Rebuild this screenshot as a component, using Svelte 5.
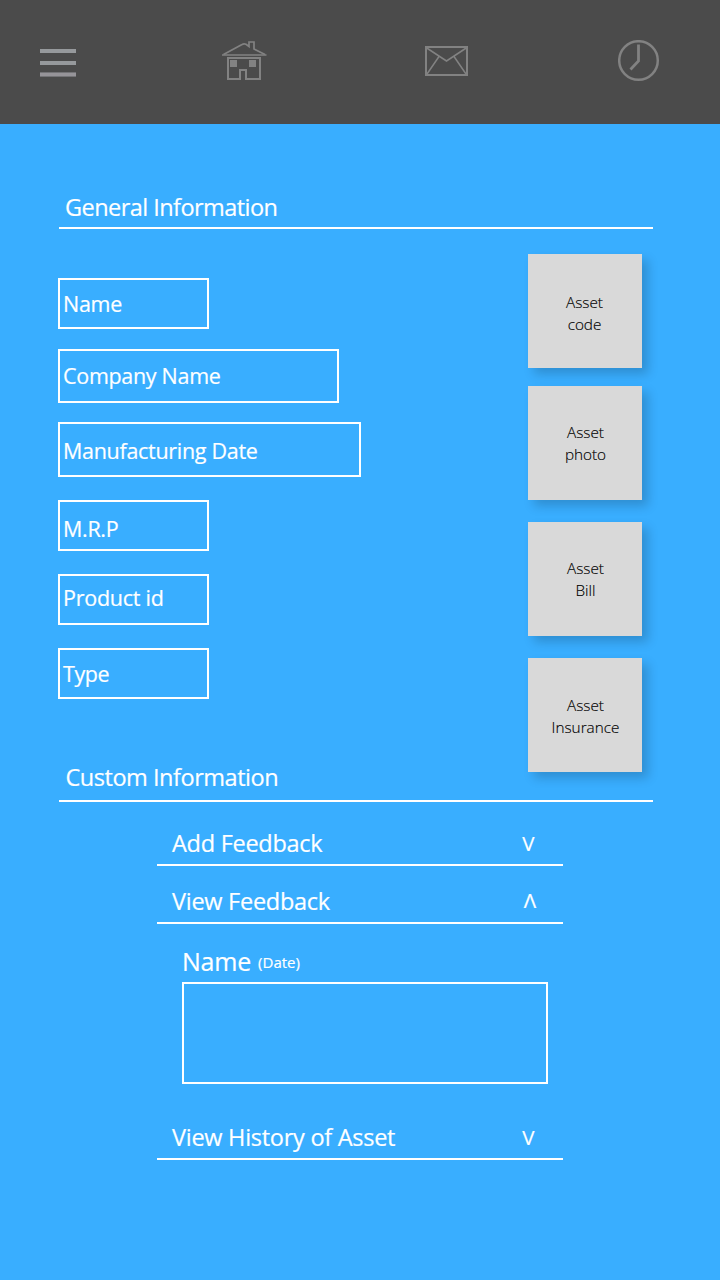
<script>
  const fields = [
    { label: 'Name', width: 151, height: 51, gap: 0, line: 47, spacing: -0.3 },
    { label: 'Company Name', width: 281, height: 54, gap: 20, line: 49, spacing: -0.3 },
    { label: 'Manufacturing Date', width: 303, height: 55, gap: 19, line: 53, spacing: -0.3 },
    { label: 'M.R.P', width: 151, height: 51, gap: 23, line: 53, spacing: -0.3 },
    { label: 'Product id', width: 151, height: 51, gap: 23, line: 43, spacing: -0.25 },
    { label: 'Type', width: 151, height: 51, gap: 23, line: 47, spacing: -0.45 }
  ];

  const tiles = [
    { name: 'code', gap: 0, pad: 37, shift: -1 },
    { name: 'photo', gap: 18, pad: 35, shift: 1 },
    { name: 'Bill', gap: 22, pad: 35, shift: 1 },
    { name: 'Insurance', gap: 22, pad: 36, shift: 1 }
  ];
</script>

<div class="screen">
  <header class="bar">
    <svg class="menu" width="36" height="28" viewBox="0 0 36 28">
      <path fill="#96999c" d="M0 0h36v4H0zM0 12h36v4H0z" />
      <path fill="#969499" d="M0 24h36v3H0z" />
      <path fill="#747477" d="M0 23h36v1H0zM0 27h36v1H0z" />
    </svg>
    <svg class="home" width="46" height="42" viewBox="0 0 46 42" fill="none" stroke="#828282" stroke-width="2">
      <path d="M1 15H45.500" stroke-width="1.700" />
      <path d="M2.500 14.500L21 4.500Q23 3.300 25 4.300L28 6.500V2H33V9L44 14.500" stroke-width="1.700" />
      <path d="M7 18H39V39H25V30H19V39H7V17" />
      <path d="M9 20h7v7H9zM28 20h7v7h-7z" fill="#828282" stroke="none" />
    </svg>
    <svg class="mail" width="43" height="30" viewBox="0 0 43 30" fill="none" stroke="#828282" stroke-width="2">
      <path d="M1 1H42V29H1Z" />
      <path d="M1 1.500L21.500 15L42 1.500M14 10.500L2 28M29 10.500L41 28" stroke-width="1.500" />
    </svg>
    <svg class="clock" width="42" height="42" viewBox="0 0 42 42" fill="none" stroke="#828282">
      <circle cx="20.500" cy="20.500" r="19.300" stroke-width="2.500" />
      <path d="M20.500 4.500V21L12.500 29.500" stroke-width="2.800" />
    </svg>
  </header>

  <main>
    <h2 class="general">General Information</h2>
    <div class="details">
      <div class="fields">
        {#each fields as f}
          <div class="field" style="width:{f.width}px;height:{f.height}px;margin-top:{f.gap}px;line-height:{f.line}px;letter-spacing:{f.spacing}px">{f.label}</div>
        {/each}
      </div>
      <div class="tiles">
        {#each tiles as t}
          <div class="tile" style="margin-top:{t.gap}px;padding-top:{t.pad}px;text-indent:{t.shift}px">
            <div>Asset</div>
            <div>{t.name}</div>
          </div>
        {/each}
      </div>
    </div>

    <h2 class="custom">Custom Information</h2>
    <section class="panels">
      <div class="row add"><span>Add Feedback</span><span class="mark">V</span></div>
      <div class="row view"><span>View Feedback</span><span class="mark up">Λ</span></div>
      <div class="author"><span>Name</span><small>(Date)</small></div>
      <div class="comment"></div>
      <div class="row history"><span>View History of Asset</span><span class="mark">V</span></div>
    </section>
  </main>
</div>

<style>
  :global(body) {
    margin: 0;
  }
  .screen {
    width: 720px;
    height: 1280px;
    overflow: hidden;
    background: #39aeff;
    color: #fff;
    font-family: 'Open Sans', 'Noto Sans', sans-serif;
    -webkit-text-stroke: 0.2px #fff;
  }
  .bar {
    box-sizing: border-box;
    display: flex;
    align-items: flex-start;
    height: 124px;
    padding: 40px 0 0 40px;
    background: #4b4b4b;
  }
  svg {
    display: block;
    flex: none;
  }
  .menu {
    margin-top: 9px;
  }
  .home {
    margin-left: 145px;
  }
  .mail {
    margin: 6px 0 0 158px;
  }
  .clock {
    margin-left: 150px;
  }
  main {
    padding: 67px 67px 0 59px;
  }
  h2 {
    box-sizing: border-box;
    margin: 0;
    padding-left: 6px;
    border-bottom: 2px solid #fff;
    font-size: 23.5px;
    font-weight: 400;
    line-height: 32px;
    white-space: nowrap;
  }
  .general {
    height: 38px;
    letter-spacing: -0.55px;
  }
  .custom {
    height: 41px;
    padding-left: 6.5px;
    letter-spacing: -0.47px;
  }
  .details {
    display: flex;
    justify-content: space-between;
    height: 532px;
  }
  .fields {
    padding-top: 49px;
    margin-left: -1px;
  }
  .field {
    box-sizing: border-box;
    padding-left: 3px;
    border: 2px solid #fff;
    font-size: 21.5px;
    white-space: nowrap;
  }
  .tiles {
    padding: 25px 11px 0 0;
  }
  .tile {
    box-sizing: border-box;
    width: 114px;
    height: 114px;
    background: #d9d9d9;
    box-shadow: 6px 6px 10px rgba(0, 0, 0, 0.18);
    color: #000;
    font-size: 15.3px;
    font-weight: 300;
    -webkit-text-stroke: 0.15px #000;
    line-height: 22px;
    text-align: center;
  }
  .panels {
    width: 406px;
    margin-left: 98px;
  }
  .row {
    box-sizing: border-box;
    display: flex;
    justify-content: space-between;
    padding: 0 28px 0 15px;
    border-bottom: 2px solid #fff;
    font-size: 23.5px;
    line-height: 32px;
    letter-spacing: -0.27px;
    white-space: nowrap;
  }
  .add {
    height: 39px;
    margin-top: 25px;
  }
  .view {
    height: 39px;
    margin-top: 19px;
  }
  .history {
    height: 39px;
    margin-top: 37px;
  }
  .mark {
    margin-right: 0.5px;
    font-size: 20.5px;
    letter-spacing: 0;
  }
  .up {
    margin: -1px -1px 0 0;
  }
  .author {
    display: flex;
    align-items: baseline;
    gap: 7px;
    height: 37px;
    margin: 21px 0 0 25px;
    font-size: 25px;
    line-height: 32px;
    letter-spacing: -0.2px;
  }
  small {
    position: relative;
    top: -3px;
    font-size: 15px;
    letter-spacing: 0;
  }
  .comment {
    box-sizing: border-box;
    width: 366px;
    height: 102px;
    margin-left: 25px;
    border: 2px solid #fff;
  }
</style>
